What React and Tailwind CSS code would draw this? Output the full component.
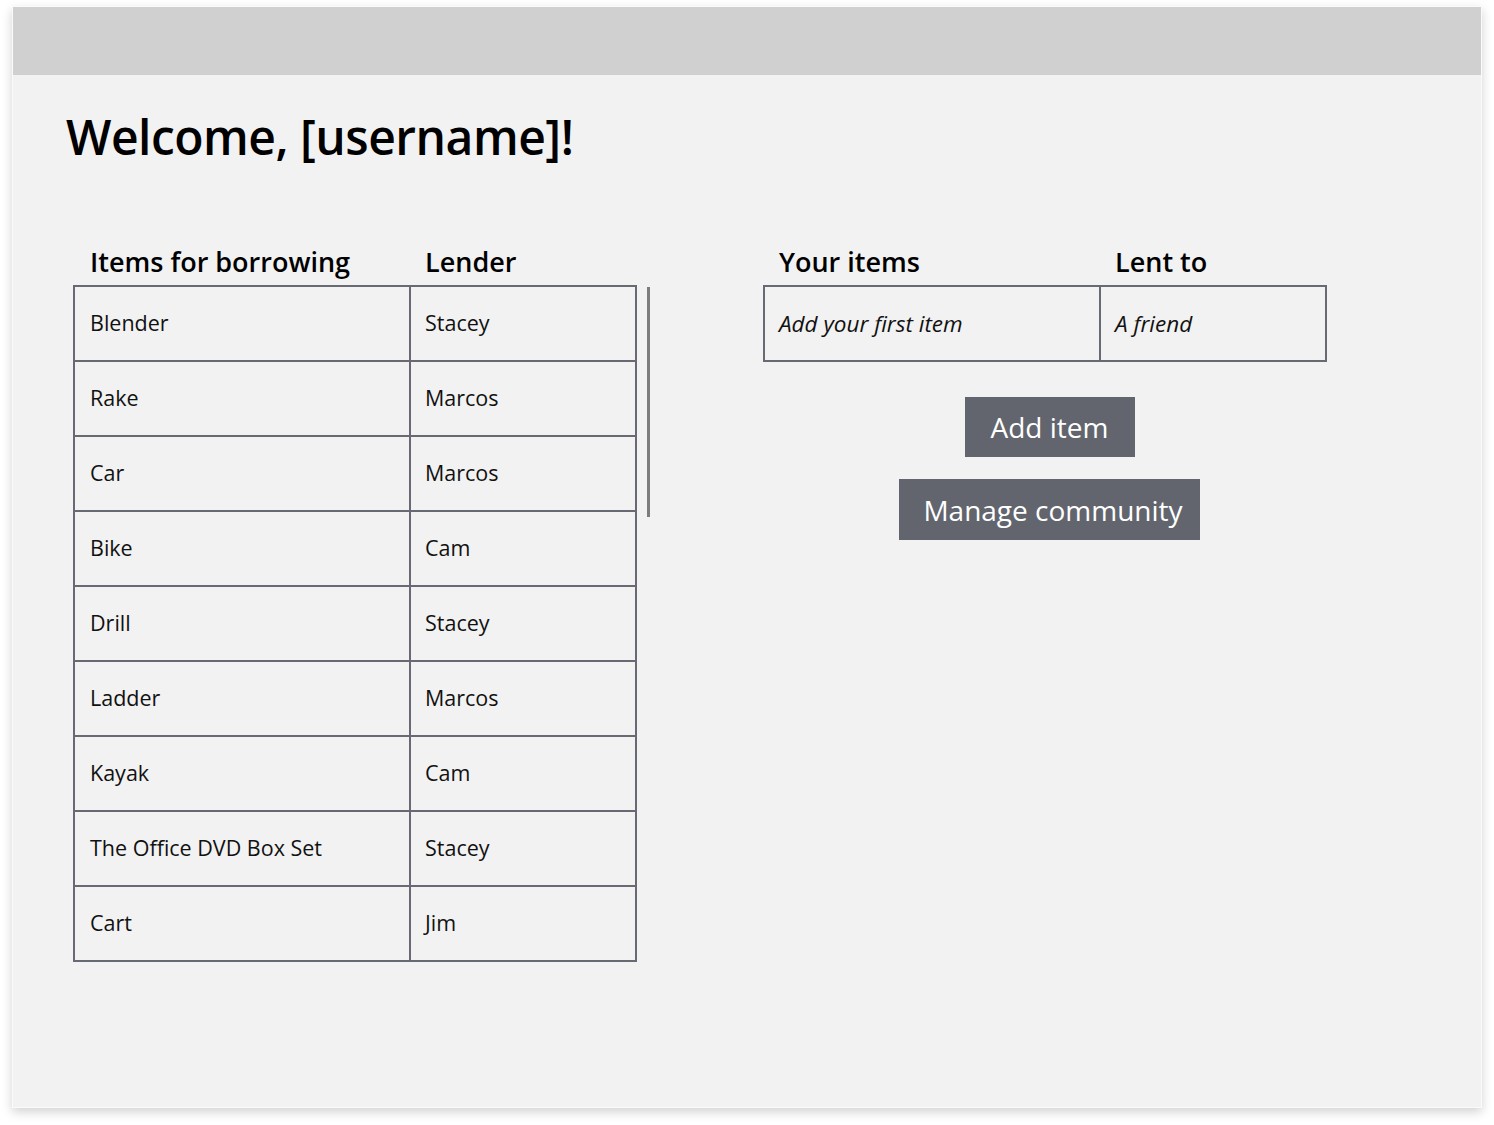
const borrowItems = [
  ["Blender", "Stacey"],
  ["Rake", "Marcos"],
  ["Car", "Marcos"],
  ["Bike", "Cam"],
  ["Drill", "Stacey"],
  ["Ladder", "Marcos"],
  ["Kayak", "Cam"],
  ["The Office DVD Box Set", "Stacey"],
  ["Cart", "Jim"],
];

function App() {
  return (
    <div className="w-[1494px] h-[1125px] bg-white pl-[12px] pt-[6px]" style={{ fontFamily: '"Open Sans", "Noto Sans", sans-serif' }}>
      <div className="w-[1470px] h-[1102px] bg-[#f2f2f2] border border-[#fafafa] shadow-[0_4px_10px_rgba(0,0,0,0.18)] flex flex-col">
        <div className="h-[68px] bg-[#d0d0d0] shrink-0"></div>

        <div className="pl-[53px] pt-[27px]">
          <h1 className="text-[48px] font-semibold text-black leading-[70px] tracking-[-0.5px]">Welcome, [username]!</h1>
        </div>

        <div className="flex pl-[60px] pt-[70px]">
          <div className="flex">
            <div>
              <div className="flex text-[27px] font-semibold text-black leading-[40px] h-[40px]">
                <div className="w-[336px] pl-[17px]">Items for borrowing</div>
                <div className="pl-[16px]">Lender</div>
              </div>
              <table className="mt-[3px] border-collapse border-2 border-[#676a72] text-[21.5px] text-[#111]">
                <tbody>
                  {borrowItems.map(([item, lender]) => (
                    <tr key={item} className="h-[75px]">
                      <td className="w-[336px] border-2 border-[#676a72] pl-[15px]">{item}</td>
                      <td className="w-[226px] border-2 border-[#676a72] pl-[14px]">{lender}</td>
                    </tr>
                  ))}
                </tbody>
              </table>
            </div>
            <div className="ml-[10px] mt-[45px] w-[3px] h-[230px] bg-[#7d7d7d]"></div>
          </div>

          <div className="ml-[113px] flex flex-col">
            <div className="flex text-[27px] font-semibold text-black leading-[40px] h-[40px]">
              <div className="w-[336px] pl-[16px]">Your items</div>
              <div className="pl-[16px]">Lent to</div>
            </div>
            <table className="mt-[3px] border-collapse border-2 border-[#676a72] text-[22.5px] text-[#111] italic">
              <tbody>
                <tr className="h-[75px]">
                  <td className="w-[336px] border-2 border-[#676a72] pl-[14px]">Add your first item</td>
                  <td className="w-[226px] border-2 border-[#676a72] pl-[14px]">A friend</td>
                </tr>
              </tbody>
            </table>
            <div className="flex flex-col items-center mt-[35px] gap-[22px] w-[563px]">
              <button className="bg-[#62656e] text-white text-[28px] h-[60px] w-[170px] ml-[10px]">Add item</button>
              <button className="bg-[#62656e] text-white text-[28px] h-[61px] w-[301px] ml-[9px] pl-[8px]">Manage community</button>
            </div>
          </div>
        </div>
      </div>
    </div>
  );
}

export default App;
